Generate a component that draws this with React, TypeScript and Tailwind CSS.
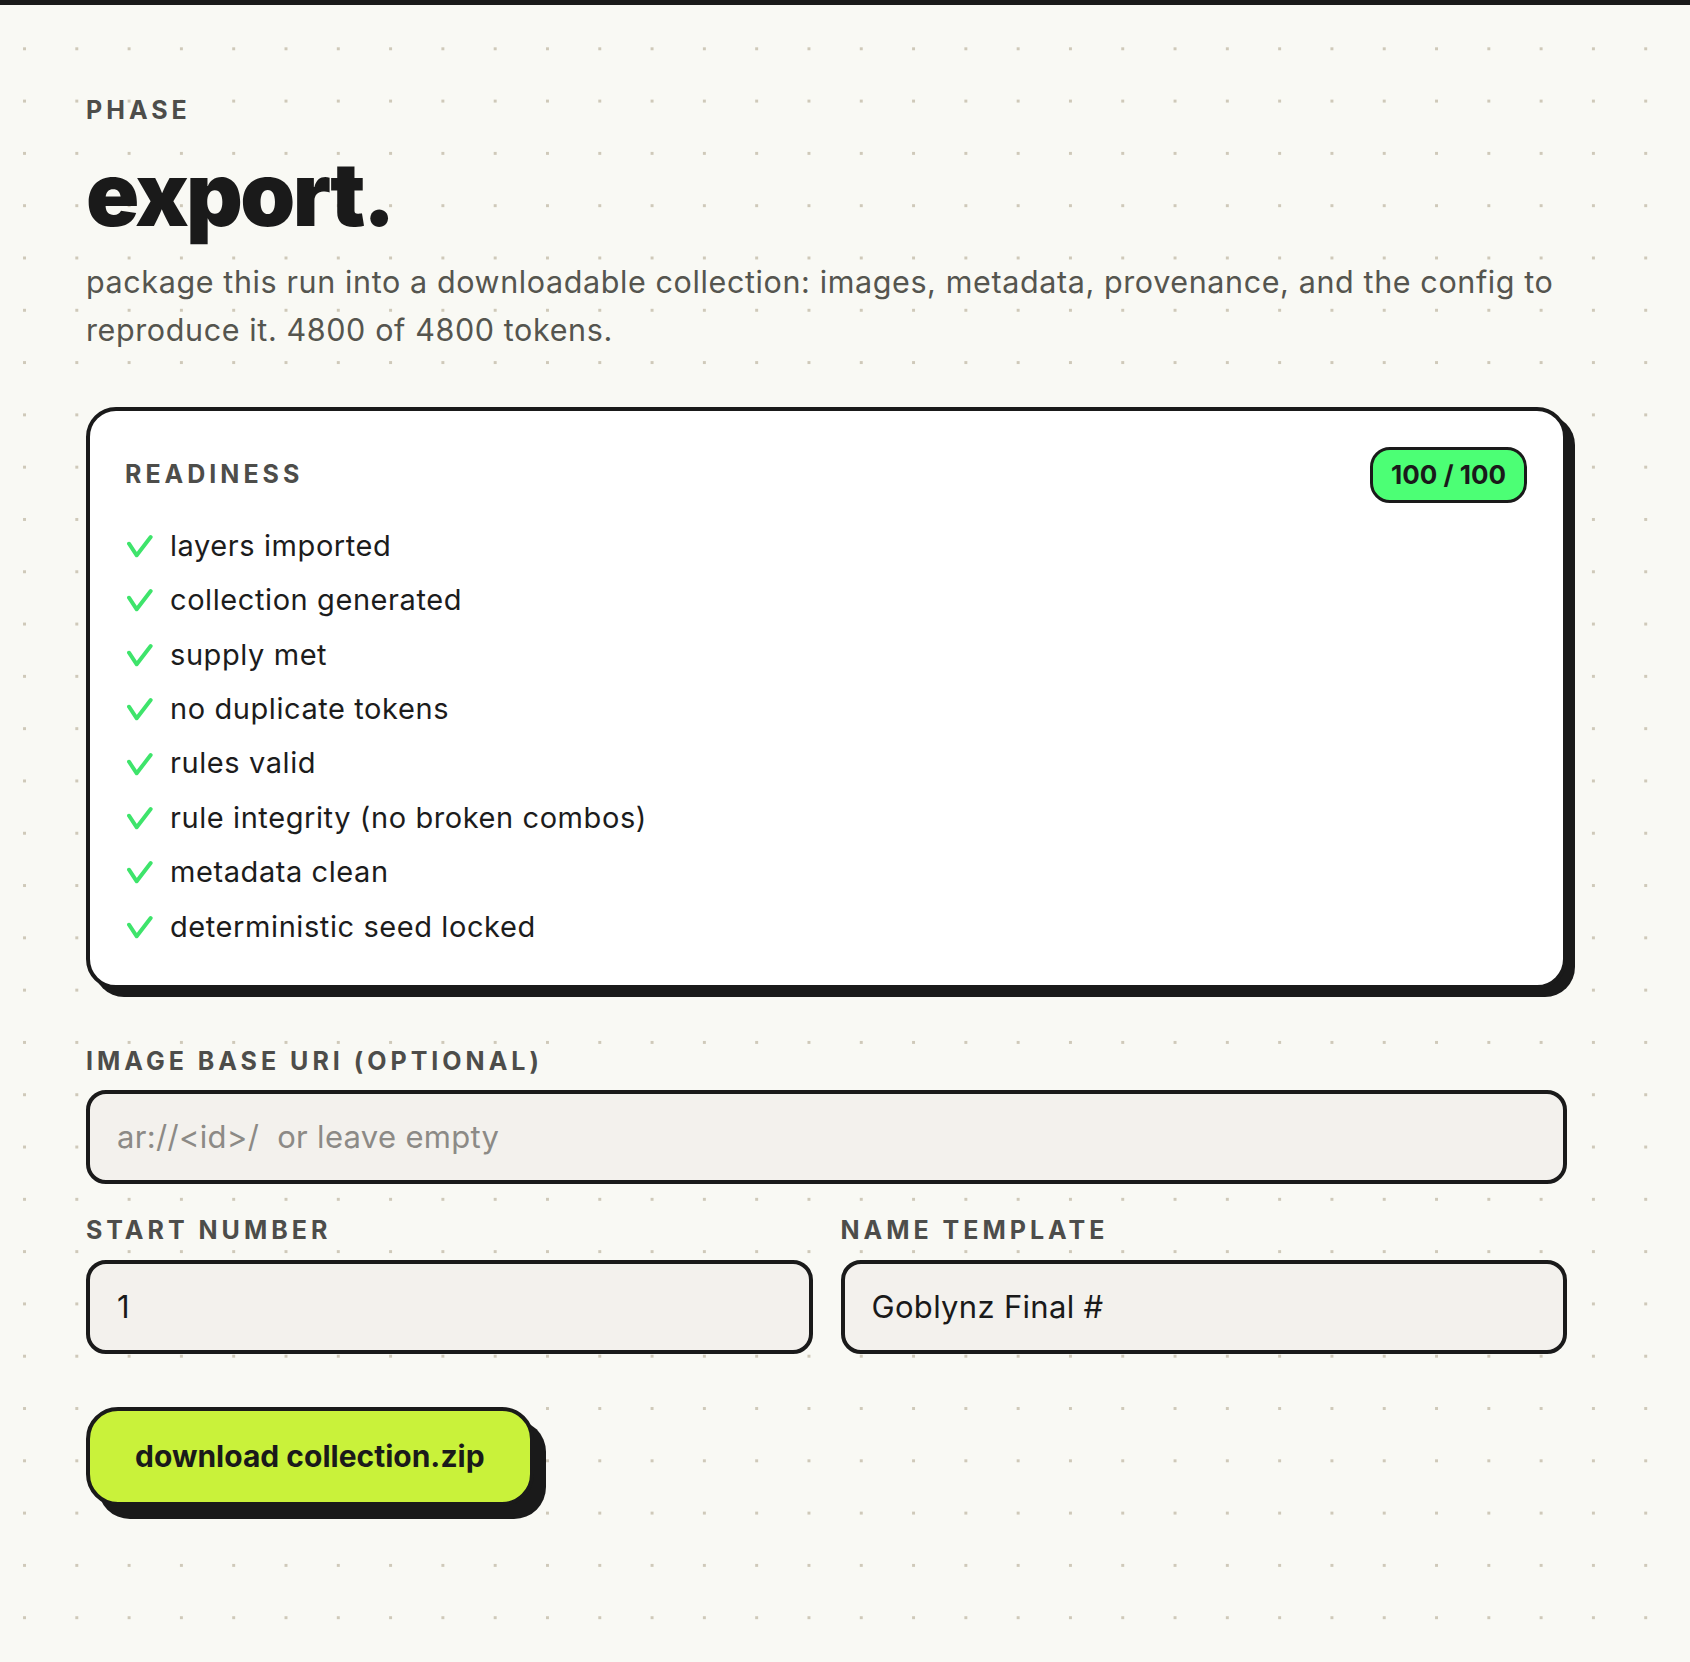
import React from "react";

const checks = [
  "layers imported",
  "collection generated",
  "supply met",
  "no duplicate tokens",
  "rules valid",
  "rule integrity (no broken combos)",
  "metadata clean",
  "deterministic seed locked",
];

const labelCls =
  "block text-[25px] leading-[25px] font-bold uppercase tracking-[0.16em] text-[#4d4d4a]";

const inputCls =
  "w-full h-[94px] rounded-[20px] border-4 border-[#1a1a1a] bg-[#f3f1ed] px-[27px] text-[31px] tracking-[0.01em] text-[#1a1a1a] placeholder:text-[#8c8a86] outline-none";

const CheckMark = () => (
  <svg width="26" height="24" viewBox="0 0 26 24" fill="none" className="shrink-0 ml-[2px]">
    <path
      d="M2 9.7 L9.7 21.3 L23.7 3"
      stroke="#3ee46b"
      strokeWidth="3.9"
      strokeLinecap="round"
      strokeLinejoin="round"
    />
  </svg>
);

export default function App() {
  return (
    <div
      className="min-h-[1662px] w-full bg-[#f9f9f4] bg-[radial-gradient(circle,#cfc9b9_1.4px,transparent_1.9px)] bg-[length:52.3px_52.3px] bg-[position:-1.65px_22.65px] text-[#1a1a1a]"
      style={{ fontFamily: "Inter, 'Noto Sans', sans-serif" }}
    >
      <div className="h-[5px] w-full bg-[#1a1a1a]" />

      <div className="ml-[86px] w-[1481px] pb-[120px]">
        <span className={`${labelCls} mt-[93px]`}>Phase</span>

        <h1 className="mt-[27px] text-[88px] leading-[88px] font-black tracking-[-0.03em] text-[#1a1a1a]">
          export.
        </h1>

        <p className="mt-[20px] text-[30.5px] leading-[48.4px] tracking-[0.02em] text-[#55554f]">
          package this run into a downloadable collection: images, metadata,
          provenance, and the config to reproduce it. 4800 of 4800 tokens.
        </p>

        {/* readiness card */}
        <div className="mt-[52px] rounded-[30px] border-4 border-[#1a1a1a] bg-white shadow-[8px_8px_0_#1a1a1a] px-[35px] pt-[36px] pb-[31px]">
          <div className="flex items-center justify-between">
            <span className={labelCls}>Readiness</span>
            <span className="mr-px flex h-[56px] items-center rounded-[20px] border-[3px] border-[#1a1a1a] bg-[#4cff75] px-[18px] text-[26px] font-bold text-[#1a1a1a]">
              100 / 100
            </span>
          </div>

          <ul className="mt-[16px]">
            {checks.map((c) => (
              <li key={c} className="flex h-[54.4px] items-center gap-[17px]">
                <CheckMark />
                <span className="text-[29px] leading-[54.4px] tracking-[0.02em] text-[#1c1c1c]">
                  {c}
                </span>
              </li>
            ))}
          </ul>
        </div>

        <label className={`${labelCls} mt-[60px]`}>Image base URI (optional)</label>
        <input
          className={`${inputCls} mt-[16px]`}
          placeholder={"ar://<id>/\u00a0 or leave empty"}
        />

        <div className="mt-[34px] grid grid-cols-2 gap-[28px]">
          <div>
            <label className={labelCls}>Start number</label>
            <input className={`${inputCls} mt-[17px]`} defaultValue="1" />
          </div>
          <div>
            <label className={labelCls}>Name template</label>
            <input className={`${inputCls} mt-[17px]`} defaultValue="Goblynz Final #" />
          </div>
        </div>

        <button className="mt-[53px] h-[99px] rounded-[32px] border-4 border-[#1a1a1a] bg-[#c9f23a] px-[45px] text-[30px] font-bold text-[#1a1a1a] shadow-[12px_13px_0_#1a1a1a]">
          download collection.zip
        </button>
      </div>
    </div>
  );
}
